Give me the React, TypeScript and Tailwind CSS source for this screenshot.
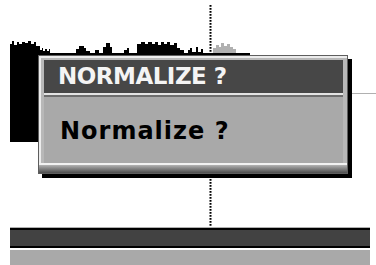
const blackWave =
  "M10,142 L10,44 12,44 12,41 14,41 14,45 17,45 17,42 19,42 19,44 22,44 22,42 25,42 25,43 28,43 28,41 31,41 31,44 34,44 34,42 36,42 36,46 40,46 40,50 42,50 42,48 43,48 43,51 45,51 45,49 47,49 47,51 49,51 49,49 50,49 50,53 " +
  "76,53 76,49 79,49 79,46 84,46 84,48 86,48 86,51 90,51 90,53 95,53 95,50 99,50 99,53 103,53 103,47 106,47 106,43 110,43 110,47 112,47 112,53 " +
  "124,53 124,50 127,50 127,48 129,48 129,53 137,53 137,44 141,44 141,42 145,42 145,44 148,44 148,42 152,42 152,44 155,44 155,42 158,42 158,45 161,45 161,42 164,42 164,44 167,44 167,42 170,42 170,45 174,45 174,43 177,43 177,48 180,48 180,50 184,50 184,53 " +
  "188,53 188,50 190,50 190,48 192,48 192,52 196,52 196,47 198,47 198,52 201,52 201,49 203,49 203,53 212,53 212,60 40,60 40,142 Z"

const grayWave =
  "M212,53 L213,53 213,48 216,48 216,45 219,45 219,47 221,47 221,43 224,43 224,46 227,46 227,44 230,44 230,47 233,47 233,49 236,49 236,53 Z"

function Track() {
  return (
    <svg width="376" height="228" viewBox="0 0 376 228" className="block shrink-0">
      <line x1="10" y1="93.5" x2="376" y2="93.5" stroke="#b0b0b0" strokeWidth="1" />
      <path d={blackWave} fill="#000" />
      <path d={grayWave} fill="#b0b0b0" />
      <rect x="40" y="53" width="210" height="2" fill="#000" />
      <line x1="210.5" y1="5" x2="210.5" y2="228" stroke="#000" strokeWidth="2" strokeDasharray="1.8 1.2" />
    </svg>
  )
}

function Dialog() {
  return (
    <div className="absolute left-[38px] top-[55px] w-[310px] h-[119px] flex flex-col border border-[#5e5e5e] bg-[#b8b8b8] shadow-[inset_2px_2px_0_#ececec,4px_4px_0_#000]">
      <div className="flex-1 flex flex-col pl-[5px] pr-[4px] pt-[4px]">
        <div className="h-[33px] bg-[#474747] pl-[14px] text-[#f4f4f4] text-[23px] leading-[33px] tracking-[-0.5px] font-bold font-['DejaVu_Sans',sans-serif] whitespace-nowrap">
          NORMALIZE ?
        </div>
        <div className="h-[2px] bg-[#e4e4e4]" />
        <div className="h-[2px] bg-[#6e6e6e]" />
        <div className="flex-1 bg-[#a9a9a9] pl-[16px] pt-[20px] text-black text-[24px] leading-[28px] tracking-[1px] font-bold font-['DejaVu_Sans',sans-serif] whitespace-nowrap">
          Normalize ?
        </div>
      </div>
      <div className="h-[2px] bg-[#f2f2f2]" />
      <div className="h-[8px] bg-gradient-to-b from-[#b4b4b4] to-[#4e4e4e]" />
    </div>
  )
}

export default function App() {
  return (
    <div className="relative w-[376px] h-[265px] bg-white overflow-hidden flex flex-col">
      <Track />
      <div className="flex-1 flex flex-col ml-[10px] mr-[6px]">
        <div className="h-[20px] bg-[#424242] border-y-2 border-black shadow-[0_-1px_0_#b0b0b0]" />
        <div className="flex-1 mt-[2px] bg-[#a9a9a9]" />
      </div>
      <Dialog />
    </div>
  )
}
